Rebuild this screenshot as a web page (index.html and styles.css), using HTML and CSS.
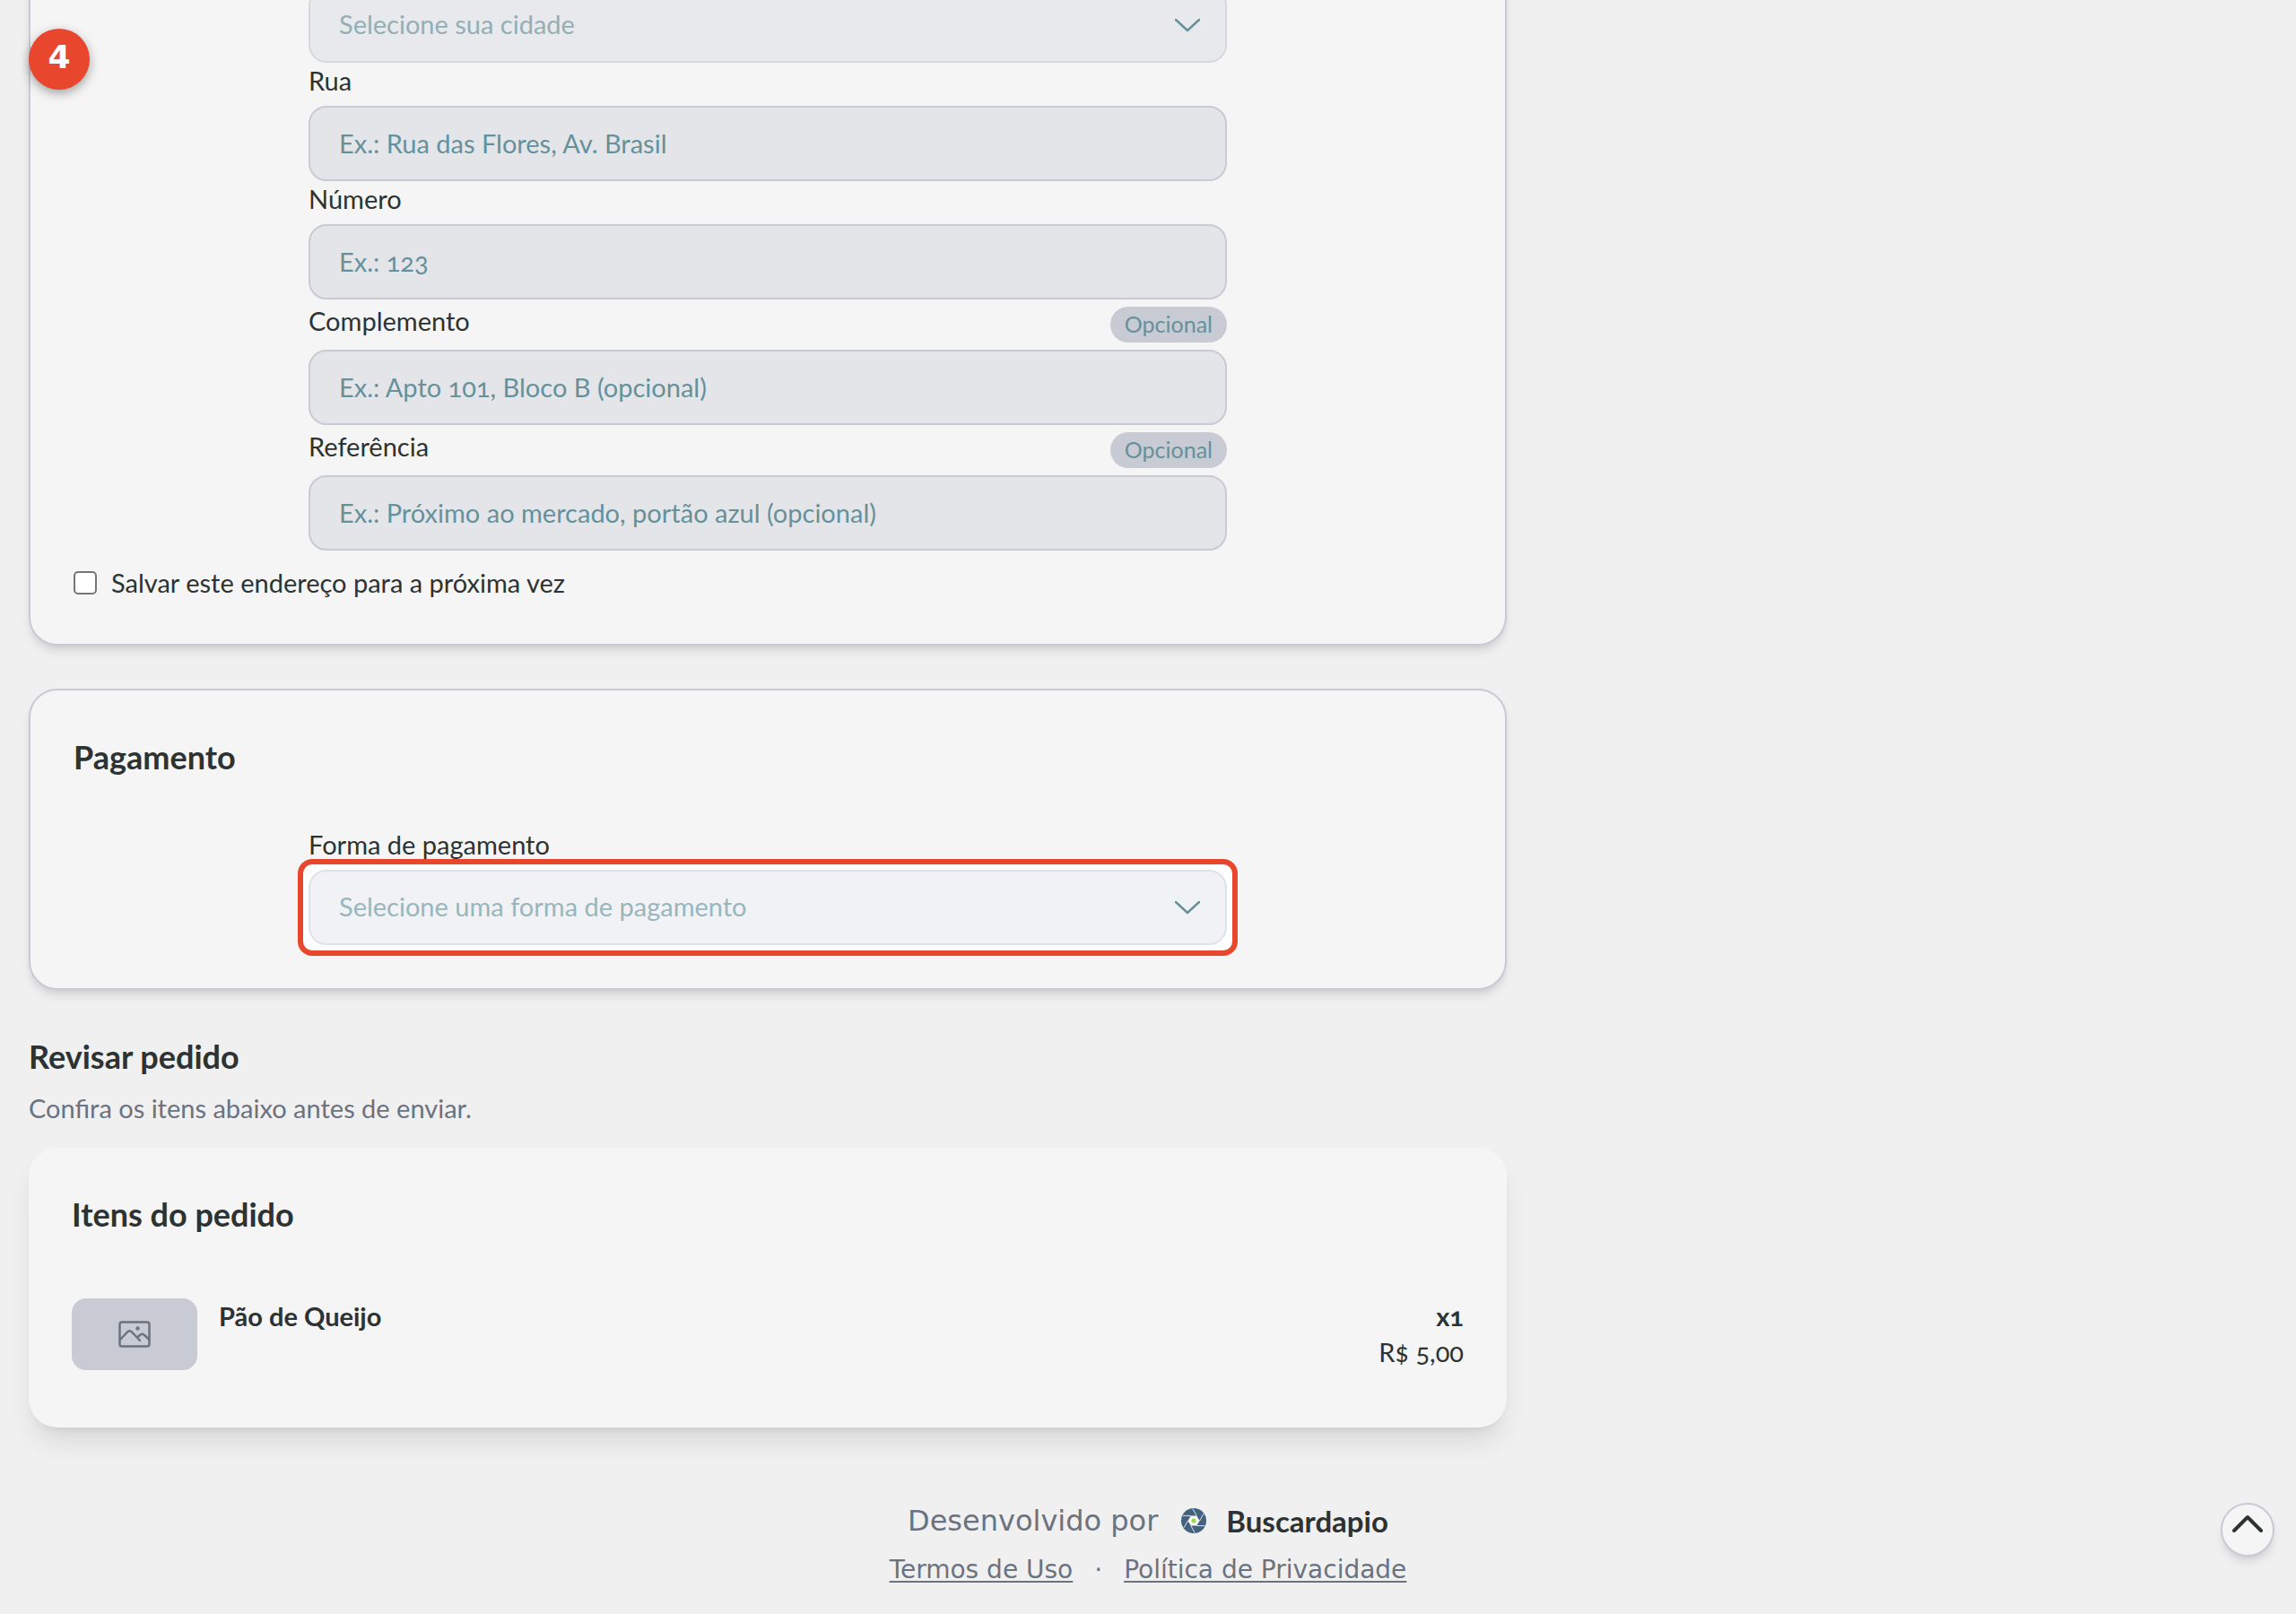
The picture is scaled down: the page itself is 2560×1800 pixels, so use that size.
FILE: index.html
```html
<!DOCTYPE html>
<html lang="pt-BR">
<head>
    <meta charset="UTF-8">
    <meta name="viewport" content="width=device-width, initial-scale=1.0">
    <title>Buscardapio - Finalizar pedido</title>
    <link rel="stylesheet" href="styles.css">
</head>
<body>
    <div class="step-badge">4</div>

    <main class="layout">
        <form class="checkout">
            <!-- Endereço -->
            <section class="card card-address">
                <div class="fields">
                    <div class="select-wrap">
                        <select class="control select-city" aria-label="Cidade">
                            <option>Selecione sua cidade</option>
                        </select>
                        <svg class="chevron" viewBox="0 0 28 16" aria-hidden="true"><path d="M1 2l13 12L27 2"/></svg>
                    </div>

                    <label class="label" for="rua">Rua</label>
                    <input class="control" type="text" id="rua" placeholder="Ex.: Rua das Flores, Av. Brasil">

                    <label class="label" for="numero">Número</label>
                    <input class="control" type="text" id="numero" placeholder="Ex.: 123">

                    <div class="label-row">
                        <label class="label" for="complemento">Complemento</label>
                        <span class="pill">Opcional</span>
                    </div>
                    <input class="control" type="text" id="complemento" placeholder="Ex.: Apto 101, Bloco B (opcional)">

                    <div class="label-row">
                        <label class="label" for="referencia">Referência</label>
                        <span class="pill">Opcional</span>
                    </div>
                    <input class="control" type="text" id="referencia" placeholder="Ex.: Próximo ao mercado, portão azul (opcional)">
                </div>

                <div class="save-row">
                    <input type="checkbox" id="salvar">
                    <label for="salvar">Salvar este endereço para a próxima vez</label>
                </div>
            </section>

            <!-- Pagamento -->
            <section class="card card-payment">
                <h2>Pagamento</h2>
                <div class="fields">
                    <label class="label" for="pagamento">Forma de pagamento</label>
                    <div class="select-wrap highlight">
                        <select class="control select-payment" id="pagamento">
                            <option>Selecione uma forma de pagamento</option>
                        </select>
                        <svg class="chevron" viewBox="0 0 28 16" aria-hidden="true"><path d="M1 2l13 12L27 2"/></svg>
                    </div>
                </div>
            </section>

            <!-- Revisão -->
            <section class="review">
                <h2>Revisar pedido</h2>
                <p class="review-hint">Confira os itens abaixo antes de enviar.</p>
                <div class="items-card">
                    <h2>Itens do pedido</h2>
                    <div class="item">
                        <div class="thumb">
                            <svg viewBox="0 0 36 30" aria-hidden="true">
                                <rect x="1.5" y="1.5" width="33" height="27" rx="2.5"/>
                                <path d="M2 21l8-8.500c1.500-1.500 3.500-1.500 5 0L24 22M21 18.500l3-2.500c1.500-1.500 3.500-1.500 5 0l5.500 5"/>
                                <circle cx="21.500" cy="8.500" r="1"/>
                            </svg>
                        </div>
                        <strong class="item-name">Pão de Queijo</strong>
                        <div class="item-values">
                            <strong>x1</strong>
                            <span>R$ 5,00</span>
                        </div>
                    </div>
                </div>
            </section>
        </form>
    </main>

    <footer class="footer">
        <div class="credit">
            <span>Desenvolvido por</span>
            <a class="brand" href="#">
                <svg viewBox="0 0 28 28" aria-hidden="true">
                    <circle class="logo-disc" cx="14" cy="14" r="14"/>
                    <path class="logo-cuts" d="M17.250 19.600L26.250 19.600M10.750 19.600L15.250 27.400M7.500 14L3 21.800M10.750 8.400L1.750 8.400M17.250 8.400L12.750 .6M20.500 14L25 6.200"/>
                    <path class="logo-center" d="M20.500 14L17.250 19.600H10.750L7.500 14L10.750 8.400H17.250z"/>
                    <circle class="logo-dot" cx="14" cy="14" r="2.500"/>
                </svg>
                <span>Buscardapio</span>
            </a>
        </div>
        <nav class="legal">
            <a href="#">Termos de Uso</a>
            <span>·</span>
            <a href="#">Política de Privacidade</a>
        </nav>
    </footer>

    <button class="to-top" type="button" aria-label="Voltar ao topo">
        <svg viewBox="0 0 34 20" aria-hidden="true"><path d="M2 18L17 3l15 15"/></svg>
    </button>
</body>
</html>
```
FILE: styles.css
```css
:root {
    --bg: #f0f0f0;
    --card: #f5f5f5;
    --border: #c8cbd3;
    --field: #e4e5e9;
    --text: #2d3232;
    --teal: #66919a;
    --muted: #6b7280;
    --accent: #e8472d;
}

* {
    box-sizing: border-box;
}

body {
    margin: 0;
    min-height: 100vh;
    display: flex;
    flex-direction: column;
    overflow: hidden;
    background: var(--bg);
    color: var(--text);
    font-family: Lato, "Open Sans", sans-serif;
    font-size: 29px;
    line-height: 40px;
    font-variant-numeric: oldstyle-nums;
}

h2 {
    margin: 0;
    padding-bottom: 4px;
    font-size: 36px;
    line-height: 52px;
    font-weight: 700;
}

.layout {
    display: grid;
    grid-template-columns: 2fr 1fr;
    gap: 24px;
    padding: 0 32px;
}

.checkout {
    display: flex;
    flex-direction: column;
    gap: 48px;
}

.card {
    padding: 48px;
    background: var(--card);
    border: 2px solid var(--border);
    border-radius: 32px;
    box-shadow: 0 8px 12px -2px rgba(0, 0, 0, 0.1), 0 4px 8px -4px rgba(0, 0, 0, 0.1);
}

/* the page is scrolled down to the end of the address form */
.card-address {
    margin-top: -64px;
}

.card-payment h2 {
    margin-bottom: 48px;
}

.fields {
    display: flex;
    flex-direction: column;
    max-width: 1024px;
    margin: 0 auto;
}

.label {
    margin-bottom: 8px;
}

.label-row {
    display: flex;
    justify-content: space-between;
    align-items: center;
    margin-bottom: 8px;
}

.label-row .label {
    margin-bottom: 0;
}

.pill {
    margin-top: 8px;
    padding: 0 16px 2px;
    border-radius: 20px;
    background: var(--border);
    color: var(--teal);
    font-size: 25px;
    line-height: 38px;
}

.control {
    display: block;
    width: 100%;
    height: 84px;
    padding: 0 32px 2px;
    border: 2px solid var(--border);
    border-radius: 20px;
    background: var(--field);
    color: var(--teal);
    font: inherit;
    appearance: none;
}

.control::placeholder {
    color: var(--teal);
    opacity: 1;
}

.select-wrap {
    position: relative;
}

.select-city {
    background: #e8e9ed;
    border-color: #d5d8dd;
    color: #93afb5;
}

.select-payment {
    background: #f1f2f6;
    border-color: #dfe2e7;
    color: #98b6bc;
}

.highlight {
    border-radius: 4px;
    background: #fff;
    box-shadow: 0 0 0 6px #fff;
    outline: 6px solid var(--accent);
    outline-offset: 6px;
}

.chevron {
    position: absolute;
    top: 34px;
    right: 30px;
    width: 28px;
    height: 16px;
    fill: none;
    stroke: var(--teal);
    stroke-width: 2.5;
    stroke-linecap: round;
    stroke-linejoin: round;
    pointer-events: none;
}

.save-row {
    display: flex;
    align-items: center;
    gap: 16px;
    margin-top: 16px;
}

.save-row input {
    width: 26px;
    height: 26px;
    margin: 0;
    appearance: none;
    border: 2px solid #767676;
    border-radius: 5px;
    background: #fff;
}

.review-hint {
    margin: 8px 0 24px;
    color: var(--muted);
}

.items-card {
    padding: 48px 48px 64px;
    border-radius: 32px;
    background: var(--card);
    box-shadow: 0 20px 30px -6px rgba(0, 0, 0, 0.1), 0 8px 12px -8px rgba(0, 0, 0, 0.1);
}

.items-card h2 {
    margin-bottom: 64px;
}

.item {
    display: flex;
    align-items: flex-start;
    gap: 24px;
}

.thumb {
    display: flex;
    align-items: center;
    justify-content: center;
    width: 140px;
    height: 80px;
    border-radius: 16px;
    background: var(--border);
}

.thumb svg {
    width: 36px;
    height: 30px;
    fill: none;
    stroke: var(--muted);
    stroke-width: 2.5;
    stroke-linecap: round;
    stroke-linejoin: round;
}

.item-values {
    display: flex;
    flex-direction: column;
    align-items: flex-end;
    margin-left: auto;
}

.footer {
    display: flex;
    flex-direction: column;
    align-items: center;
    padding: 72px 32px 24px;
    color: var(--muted);
    font-family: "DejaVu Sans", sans-serif;
}

.credit {
    display: flex;
    align-items: center;
    gap: 24px;
    font-size: 32px;
    line-height: 64px;
}

.brand {
    display: flex;
    align-items: center;
    gap: 20px;
    color: var(--text);
    font-family: Lato, sans-serif;
    font-size: 33px;
    font-weight: 700;
    text-decoration: none;
}

.brand svg {
    width: 32px;
    height: 28px;
}

.logo-disc {
    fill: #43627d;
}

.logo-center {
    fill: #fff;
}

.logo-cuts {
    fill: none;
    stroke: #dfe5ea;
    stroke-width: 1;
}

.logo-dot {
    fill: #86e33a;
}

.legal {
    display: flex;
    gap: 24px;
    font-size: 28px;
    line-height: 46px;
}

.legal a {
    color: inherit;
    text-underline-offset: 3px;
}

.step-badge {
    position: absolute;
    top: 32px;
    left: 32px;
    z-index: 2;
    width: 68px;
    border-radius: 50%;
    background: var(--accent);
    color: #fff;
    font: 700 36px/64px "DejaVu Sans", sans-serif;
    padding-bottom: 4px;
    text-align: center;
    box-shadow: 0 4px 12px rgba(0, 0, 0, 0.35);
}

.to-top {
    position: fixed;
    right: 24px;
    bottom: 64px;
    display: flex;
    align-items: center;
    justify-content: center;
    width: 60px;
    height: 60px;
    padding: 0 0 14px;
    border: 2px solid var(--border);
    border-radius: 50%;
    background: var(--card);
    box-shadow: 0 8px 12px -2px rgba(0, 0, 0, 0.1), 0 4px 8px -4px rgba(0, 0, 0, 0.1);
}

.to-top svg {
    width: 34px;
    height: 20px;
    fill: none;
    stroke: var(--text);
    stroke-width: 4;
    stroke-linecap: round;
    stroke-linejoin: round;
}
```
